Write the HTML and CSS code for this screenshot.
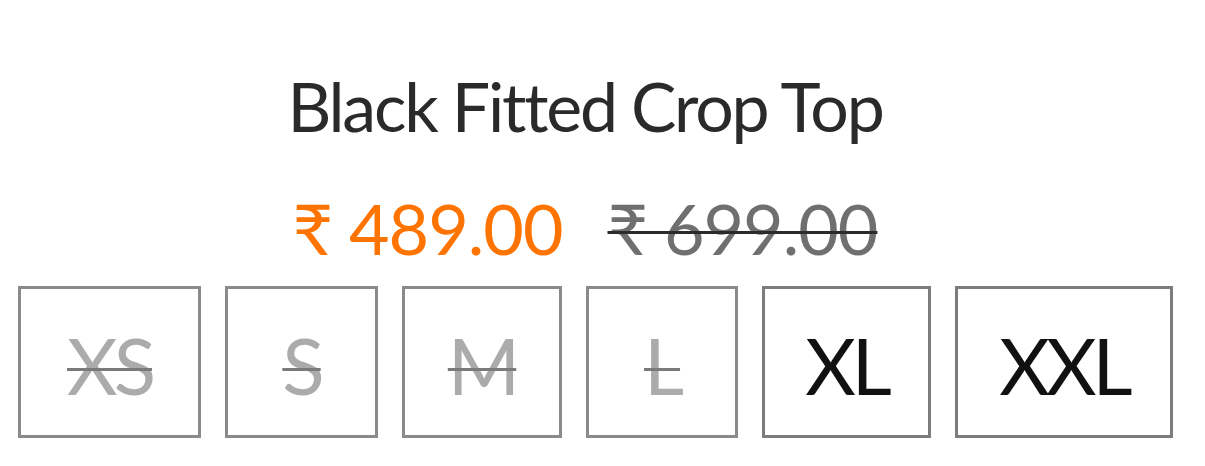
FILE: index.html
```html
<!DOCTYPE html>
<html lang="en">
<head>
<meta charset="utf-8">
<title>Black Fitted Crop Top</title>
<link rel="stylesheet" href="styles.css">
</head>
<body>
<main class="product">
  <h1 class="product-title">Black Fitted Crop Top</h1>
  <div class="price-row">
    <span class="price-now">₹ 489.00</span>
    <span class="price-was">₹ 699.00</span>
  </div>
  <ul class="sizes">
    <li class="size size-off size-xs">XS</li>
    <li class="size size-off size-s">S</li>
    <li class="size size-off size-m">M</li>
    <li class="size size-off size-l">L</li>
    <li class="size size-xl">XL</li>
    <li class="size size-xxl">XXL</li>
  </ul>
</main>
</body>
</html>
```
FILE: styles.css
```css
html, body {
  margin: 0;
  padding: 0;
  background: #ffffff;
}

body {
  font-family: Lato, "Liberation Sans", sans-serif;
  color: #222222;
}

.product {
  width: 1170px;
  display: flex;
  flex-direction: column;
  align-items: center;
}

.product-title {
  margin: 64px 0 0;
  font-size: 68px;
  font-weight: 400;
  line-height: 84px;
  color: #2a2a2a;
  letter-spacing: -2.2px;
}

.price-row {
  display: flex;
  gap: 45px;
  margin-top: 40px;
  font-size: 70px;
  line-height: 80px;
  letter-spacing: -1px;
}

.price-now {
  color: #ff7300;
}

.price-was {
  color: #6f6f6f;
  text-decoration: line-through;
  text-decoration-color: #2b2b2b;
  text-decoration-thickness: 3px;
}

.sizes {
  list-style: none;
  margin: 18px 0 0;
  padding: 0 0 0 18px;
  align-self: flex-start;
  display: flex;
  gap: 24px;
}

.size {
  box-sizing: border-box;
  flex: none;
  height: 152px;
  padding-top: 6px;
  border: 3px solid #8a8a8a;
  display: flex;
  align-items: center;
  justify-content: center;
  font-size: 78px;
  color: #111111;
  letter-spacing: -4px;
}

.size-xs { width: 183px; }
.size-s { width: 153px; }
.size-m { width: 160px; }
.size-l { width: 152px; }
.size-xl { width: 169px; border-color: #7c7c7c; }
.size-xxl { width: 218px; border-color: #7c7c7c; }

.size-off {
  color: #ababab;
  text-decoration: line-through;
  text-decoration-color: #7a7a7a;
  text-decoration-thickness: 3px;
}
```
